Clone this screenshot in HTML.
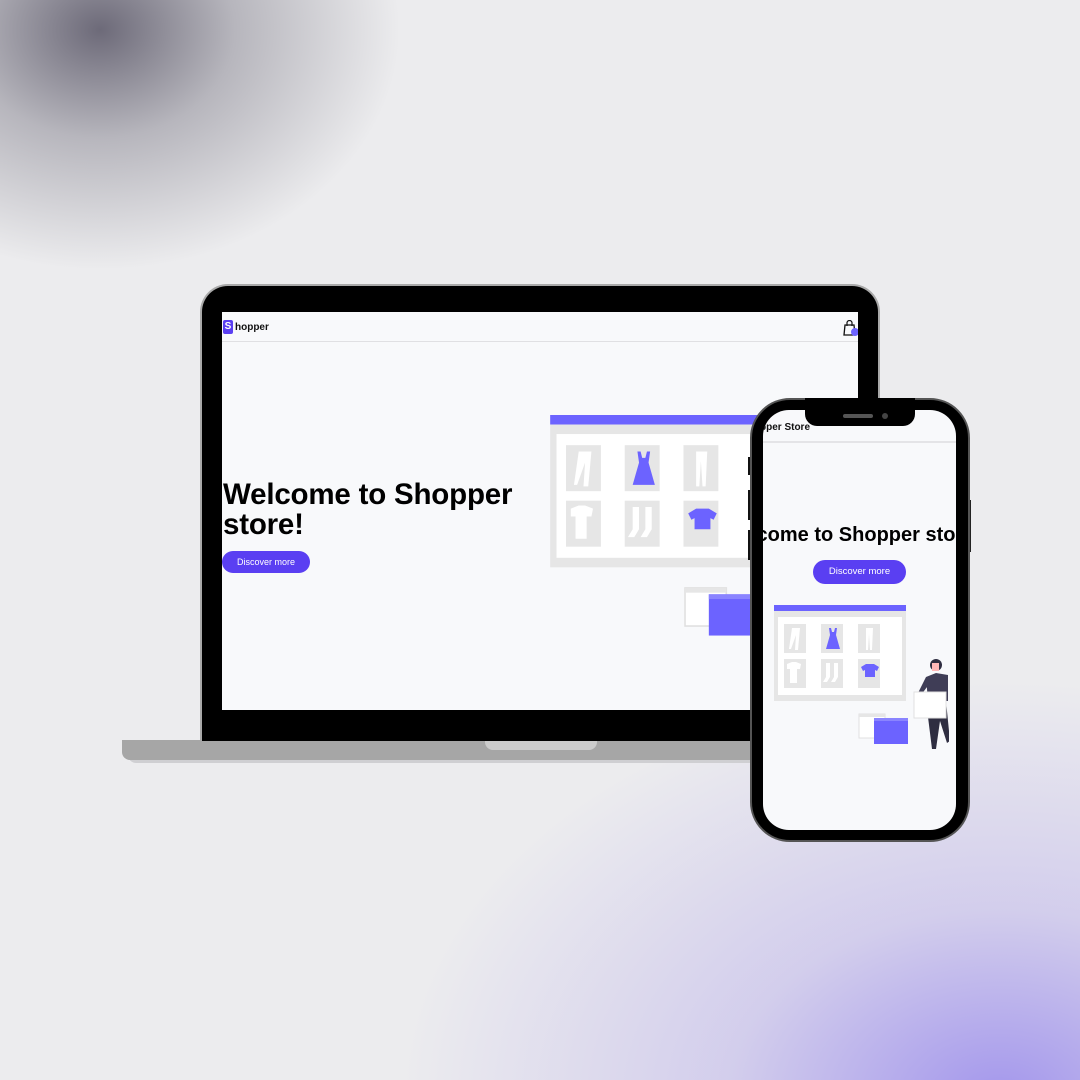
<!DOCTYPE html>
<html><head><meta charset="utf-8"><style>
*{margin:0;padding:0;box-sizing:border-box}
body{width:1080px;height:1080px;overflow:hidden;position:relative;font-family:"Liberation Sans","DejaVu Sans",sans-serif;
background:
radial-gradient(ellipse 300px 240px at 100px 30px, rgba(95,92,108,0.9), rgba(130,128,140,0.5) 45%, rgba(236,236,238,0) 100%),
radial-gradient(ellipse 600px 420px at 1000px 1100px, rgba(150,135,235,0.85), rgba(185,175,235,0.5) 45%, rgba(236,236,238,0) 100%),
#ececee;}
.abs{position:absolute}
.btn{background:#5a3ff2;color:#fff;font-size:9px;text-align:center;border-radius:12px}
</style></head><body>
<svg width="0" height="0" style="position:absolute">
<defs>
<symbol id="ill" viewBox="0 0 175 150">
 <rect x="0" y="0" width="132" height="6" fill="#6c63ff"/>
 <rect x="0" y="6" width="132" height="90" fill="#e6e6e6"/>
 <rect x="4" y="12" width="124" height="78" fill="#fff"/>
 <rect x="10" y="19" width="22" height="29" fill="#e6e6e6"/>
 <rect x="47" y="19" width="22" height="29" fill="#e6e6e6"/>
 <rect x="84" y="19" width="22" height="29" fill="#e6e6e6"/>
 <rect x="10" y="54" width="22" height="29" fill="#e6e6e6"/>
 <rect x="47" y="54" width="22" height="29" fill="#e6e6e6"/>
 <rect x="84" y="54" width="22" height="29" fill="#e6e6e6"/>
 <path d="M18 23h8l-2 22h-3l1-15-5 14h-2z" fill="#fff"/>
 <path d="M55 23h2l1 4h2l1-4h2l-1 7 4 14h-14l4-14z" fill="#6c63ff"/>
 <path d="M92 23h7l-1 22h-2l-1-16-1 16h-2z" fill="#fff"/>
 <path d="M13 59l5-2h4l5 2-1 5h-3v14h-7v-14h-3z" fill="#fff"/>
 <path d="M52 58h4v14l-3 5h-4l3-5zM60 58h4v14l-3 5h-4l3-5z" fill="#fff"/>
 <path d="M87 62l5-3h8l5 3-2 4-2-1v7h-10v-7l-2 1z" fill="#6c63ff"/>
 <rect x="85" y="109" width="26" height="24" fill="#fff" stroke="#e0e0e0"/>
 <rect x="85" y="109" width="26" height="3" fill="#e6e6e6"/>
 <rect x="100" y="113" width="34" height="26" fill="#6c63ff"/>
 <rect x="100" y="113" width="34" height="3" fill="#8a84ff"/>
 <circle cx="162" cy="60" r="6" fill="#2f2e41"/>
 <rect x="158" y="58" width="7" height="8" fill="#ffb8b8"/>
 <path d="M152 72l10-4 12 2v26h-20z" fill="#3f3d56"/>
 <path d="M152 96h20l4 40-3 2-7-22-4 28h-4z" fill="#2f2e41"/>
 <path d="M152 72l-8 16 3 2 9-12z" fill="#3f3d56"/>
 <rect x="140" y="87" width="32" height="26" fill="#fff" stroke="#e0e0e0"/>
</symbol>
</defs>
</svg>

<div class="abs" style="left:128px;top:745px;width:780px;height:18px;background:#cfcfd2;border-radius:0 0 8px 8px"></div>
<div class="abs" style="left:122px;top:740px;width:780px;height:20px;background:#a6a6a6;border-radius:0 0 0 8px"></div>
<div class="abs" style="left:485px;top:740px;width:112px;height:10px;background:#cbcbcb;border-radius:0 0 8px 8px"></div>
<div class="abs" style="left:200px;top:284px;width:680px;height:457px;background:#000;border:2px solid #a9a9a9;border-bottom:none;border-radius:28px 28px 0 0"></div>
<div class="abs" style="left:222px;top:312px;width:636px;height:398px;background:#f8f9fb;overflow:hidden">
 <div class="abs" style="left:0;top:0;width:636px;height:30px;border-bottom:1px solid #e0e0e3"></div>
 <div class="abs" style="left:1px;top:8px;width:10px;height:14px;background:#5a3ff2;border-radius:2px;color:#fff;font-size:10px;font-weight:bold;text-align:center;line-height:14px">S</div>
 <div class="abs" style="left:13px;top:9px;font-size:10px;font-weight:bold;color:#111;line-height:14px">hopper</div>
 <svg class="abs" style="left:621px;top:8px" width="15" height="16" viewBox="0 0 15 16"><path d="M2 5h9l1 10H1z" fill="none" stroke="#111" stroke-width="1.3"/><path d="M4 6V3a2.5 2.5 0 015 0v3" fill="none" stroke="#111" stroke-width="1.2"/><circle cx="12" cy="12" r="4" fill="#6c63ff"/></svg>
 <div class="abs" style="left:1px;top:168px;font-size:29.5px;font-weight:bold;color:#000;line-height:30px;letter-spacing:-0.2px">Welcome to Shopper<br>store!</div>
 <div class="abs btn" style="left:0;top:239px;width:88px;height:22px;line-height:22px">Discover more</div>
 <svg class="abs" style="left:328px;top:103px" width="278" height="238"><use href="#ill" width="278" height="238"/></svg>
</div>

<div class="abs" style="left:748px;top:457px;width:4px;height:18px;background:#111"></div>
<div class="abs" style="left:748px;top:490px;width:4px;height:30px;background:#111"></div>
<div class="abs" style="left:748px;top:530px;width:4px;height:30px;background:#111"></div>
<div class="abs" style="left:966px;top:500px;width:5px;height:52px;background:#222"></div>
<div class="abs" style="left:750px;top:398px;width:220px;height:444px;background:#000;border:2px solid #555;border-radius:40px"></div>
<div class="abs" style="left:763px;top:410px;width:193px;height:420px;background:#f8f9fb;border-radius:26px;overflow:hidden">
 <div class="abs" style="left:0;top:0;width:193px;height:33px;border-bottom:2px solid #e4e4e7"></div>
 <div class="abs" style="left:-3px;top:12px;font-size:10px;font-weight:bold;color:#111;white-space:nowrap">pper Store</div>
 <div class="abs" style="left:-12px;top:114px;font-size:20px;font-weight:bold;color:#000;white-space:nowrap">lcome to Shopper store!</div>
 <div class="abs btn" style="left:50px;top:150px;width:93px;height:24px;line-height:24px;font-size:9.5px">Discover more</div>
 <svg class="abs" style="left:11px;top:195px" width="175" height="150"><use href="#ill" width="175" height="150"/></svg>
</div>
<div class="abs" style="left:805px;top:398px;width:110px;height:28px;background:#000;border-radius:0 0 12px 12px"></div>
<div class="abs" style="left:843px;top:414px;width:30px;height:4px;background:#555;border-radius:2px"></div>
<div class="abs" style="left:882px;top:413px;width:6px;height:6px;background:#444;border-radius:50%"></div>
</body></html>
